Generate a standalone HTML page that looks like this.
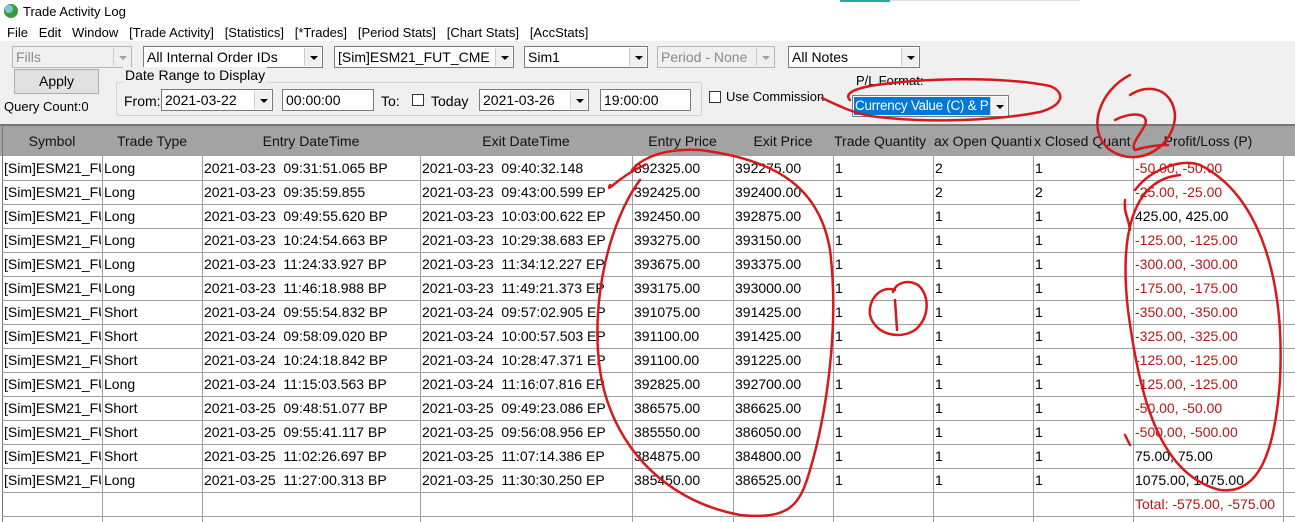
<!DOCTYPE html>
<html><head><meta charset="utf-8"><style>
*{margin:0;padding:0;box-sizing:border-box}
body{width:1295px;height:522px;overflow:hidden;background:#fff;font-family:"Liberation Sans",Arial,sans-serif;font-size:13px;color:#000;position:relative}
.a{position:absolute;white-space:nowrap}
.tb{position:absolute;left:0;top:41px;width:1295px;height:84px;background:#f0f0f0}
.cb{position:absolute;height:22px;background:#fff;border:1px solid #7a7a7a;font-size:14px;padding:2px 3px;line-height:16px;white-space:nowrap;overflow:hidden}
.cb.dis{background:#f0f0f0;color:#8a8a8a;border-color:#b5b5b5}
.dd{position:absolute;right:1px;top:1px;width:17px;height:18px;background:#f0f0f0;border-left:1px solid #ccc}
.dd:after{content:"";position:absolute;left:5px;top:8px;border-left:4px solid transparent;border-right:4px solid transparent;border-top:4px solid #000}
.dis .dd:after{border-top-color:#a0a0a0}
.grid{position:absolute;left:0;top:124px;width:1295px;height:398px;font-size:14px}
.hd{position:absolute;left:0;top:0;width:1295px;height:32px;background:#a3a3a3;border-top:2px solid #777}
.hc{position:absolute;top:9px;text-align:center;color:#111;white-space:nowrap;overflow:hidden}
.vl{position:absolute;width:1px;background:#a0a0a0}
.hl{position:absolute;left:2px;width:1293px;height:1px;background:#a0a0a0}
.c{position:absolute;white-space:nowrap;overflow:hidden;line-height:24px}
.r{color:#b01818}
</style></head><body>
<div class="a" style="left:840px;top:0;width:50px;height:2px;background:#2aa7a0"></div>
<div class="a" style="left:890px;top:0;width:190px;height:1px;background:#ddd"></div>
<svg class="a" style="left:3px;top:3px" width="16" height="16"><circle cx="8" cy="8" r="7" fill="#3c9a3c"/><circle cx="6" cy="6" r="4" fill="#8fd0ff" opacity=".8"/></svg>
<div class="a" style="left:23px;top:4px;font-size:13px">Trade Activity Log</div>
<div class="a" style="left:7px;top:25px;font-size:13px;word-spacing:0">File &nbsp; Edit &nbsp; Window &nbsp; [Trade Activity] &nbsp; [Statistics] &nbsp; [*Trades] &nbsp; [Period Stats] &nbsp; [Chart Stats] &nbsp; [AccStats]</div>
<div class="tb"></div>
<div class="cb dis" style="left:12px;top:46px;width:120px">Fills<div class="dd"></div></div>
<div class="cb" style="left:143px;top:46px;width:180px">All Internal Order IDs<div class="dd"></div></div>
<div class="cb" style="left:334px;top:46px;width:180px">[Sim]ESM21_FUT_CME<div class="dd"></div></div>
<div class="cb" style="left:524px;top:46px;width:124px">Sim1<div class="dd"></div></div>
<div class="cb dis" style="left:657px;top:46px;width:118px">Period - None<div class="dd"></div></div>
<div class="cb" style="left:788px;top:46px;width:132px">All Notes<div class="dd"></div></div>
<div class="a" style="left:14px;top:69px;width:85px;height:25px;border:1px solid #adadad;background:#e1e1e1;text-align:center;font-size:14px;line-height:23px">Apply</div>
<div class="a" style="left:4px;top:99px;font-size:13px">Query Count:0</div>
<div class="a" style="left:116px;top:82px;width:586px;height:34px;border:1px solid #d0d0d0;border-radius:2px"></div>
<div class="a" style="left:123px;top:67px;background:#f0f0f0;padding:0 2px;font-size:14px">Date Range to Display</div>
<div class="a" style="left:124px;top:93px;font-size:14px">From:</div>
<div class="cb" style="left:161px;top:89px;width:112px">2021-03-22<div class="dd"></div></div>
<div class="cb" style="left:282px;top:89px;width:92px">00:00:00</div>
<div class="a" style="left:381px;top:93px;font-size:14px">To:</div>
<div class="a" style="left:412px;top:94px;width:12px;height:12px;border:1px solid #333;background:#fff"></div>
<div class="a" style="left:431px;top:93px;font-size:14px">Today</div>
<div class="cb" style="left:479px;top:89px;width:110px">2021-03-26<div class="dd"></div></div>
<div class="cb" style="left:600px;top:89px;width:91px">19:00:00</div>
<div class="a" style="left:709px;top:91px;width:12px;height:12px;border:1px solid #333;background:#fff"></div>
<div class="a" style="left:726px;top:89px;font-size:13px">Use Commission</div>
<div class="a" style="left:856px;top:73px;font-size:13px">P/L Format:</div>
<div class="cb" style="left:852px;top:95px;width:157px;padding:1px">
<span style="display:inline-block;background:#0078d7;color:#fff;padding:0 1px;height:18px;line-height:18px;width:136px;overflow:hidden;font-size:13.5px;letter-spacing:-0.3px">Currency Value (C) &amp; P</span><div class="dd"></div></div>

<div class="grid">
<div class="hd"></div>
<div class="hc" style="left:2px;width:100px">Symbol</div>
<div class="hc" style="left:102px;width:100px">Trade Type</div>
<div class="hc" style="left:202px;width:218px">Entry DateTime</div>
<div class="hc" style="left:420px;width:212px">Exit DateTime</div>
<div class="hc" style="left:632px;width:101px">Entry Price</div>
<div class="hc" style="left:733px;width:100px">Exit Price</div>
<div class="hc" style="left:834px;width:100px;text-align:left">Trade Quantity</div>
<div class="hc" style="left:934px;width:100px;text-align:left">ax Open Quanti</div>
<div class="hc" style="left:1034px;width:100px;text-align:left">x Closed Quant</div>
<div class="hc" style="left:1133px;width:150px">Profit/Loss (P)</div>
<div class="vl" style="left:2px;top:0;height:398px;background:#777"></div>
<div class="vl" style="left:102px;top:32px;height:366px"></div>
<div class="vl" style="left:202px;top:32px;height:366px"></div>
<div class="vl" style="left:420px;top:32px;height:366px"></div>
<div class="vl" style="left:632px;top:32px;height:366px"></div>
<div class="vl" style="left:733px;top:32px;height:366px"></div>
<div class="vl" style="left:833px;top:32px;height:366px"></div>
<div class="vl" style="left:933px;top:32px;height:366px"></div>
<div class="vl" style="left:1033px;top:32px;height:366px"></div>
<div class="vl" style="left:1133px;top:32px;height:366px"></div>
<div class="vl" style="left:1283px;top:32px;height:366px"></div>
<div id="rows"></div>
</div>
<script>
var d=[
["Long","2021-03-23  09:31:51.065 BP","2021-03-23  09:40:32.148","392325.00","392275.00","1","2","1","-50.00, -50.00",1],
["Long","2021-03-23  09:35:59.855","2021-03-23  09:43:00.599 EP","392425.00","392400.00","1","2","2","-25.00, -25.00",1],
["Long","2021-03-23  09:49:55.620 BP","2021-03-23  10:03:00.622 EP","392450.00","392875.00","1","1","1","425.00, 425.00",0],
["Long","2021-03-23  10:24:54.663 BP","2021-03-23  10:29:38.683 EP","393275.00","393150.00","1","1","1","-125.00, -125.00",1],
["Long","2021-03-23  11:24:33.927 BP","2021-03-23  11:34:12.227 EP","393675.00","393375.00","1","1","1","-300.00, -300.00",1],
["Long","2021-03-23  11:46:18.988 BP","2021-03-23  11:49:21.373 EP","393175.00","393000.00","1","1","1","-175.00, -175.00",1],
["Short","2021-03-24  09:55:54.832 BP","2021-03-24  09:57:02.905 EP","391075.00","391425.00","1","1","1","-350.00, -350.00",1],
["Short","2021-03-24  09:58:09.020 BP","2021-03-24  10:00:57.503 EP","391100.00","391425.00","1","1","1","-325.00, -325.00",1],
["Short","2021-03-24  10:24:18.842 BP","2021-03-24  10:28:47.371 EP","391100.00","391225.00","1","1","1","-125.00, -125.00",1],
["Long","2021-03-24  11:15:03.563 BP","2021-03-24  11:16:07.816 EP","392825.00","392700.00","1","1","1","-125.00, -125.00",1],
["Short","2021-03-25  09:48:51.077 BP","2021-03-25  09:49:23.086 EP","386575.00","386625.00","1","1","1","-50.00, -50.00",1],
["Short","2021-03-25  09:55:41.117 BP","2021-03-25  09:56:08.956 EP","385550.00","386050.00","1","1","1","-500.00, -500.00",1],
["Short","2021-03-25  11:02:26.697 BP","2021-03-25  11:07:14.386 EP","384875.00","384800.00","1","1","1","75.00, 75.00",0],
["Long","2021-03-25  11:27:00.313 BP","2021-03-25  11:30:30.250 EP","385450.00","386525.00","1","1","1","1075.00, 1075.00",0]];
var x=[4,104,204,422,634,735,835,935,1035,1135],w=[97,97,215,209,98,97,97,97,97,147],h="";
function e(s){return s.replace(/  /g," &nbsp;")}
for(var i=0;i<d.length;i++){var t=32+24*i;var v=["[Sim]ESM21_FUT_CME"].concat(d[i].slice(0,9));
for(var j=0;j<10;j++)h+='<div class="c'+(j==9&&d[i][9]?' r':'')+'" style="left:'+x[j]+'px;top:'+t+'px;width:'+w[j]+'px">'+e(v[j])+'</div>';
h+='<div class="hl" style="top:'+(t+24)+'px"></div>';}
h+='<div class="c r" style="left:1135px;top:368px">Total: -575.00, -575.00</div><div class="hl" style="top:392px"></div>';
document.getElementById("rows").innerHTML=h;
</script>
<svg class="a" style="left:0;top:0" width="1295" height="522" fill="none" stroke="#d41a1a" stroke-width="2.5" stroke-linecap="round">
<path d="M822 98 C835 104 850 112 870 116 C930 124 1000 120 1040 112 C1065 105 1065 92 1050 86 C1000 76 920 78 870 86 C850 90 845 95 850 100"/>
<path d="M1130 75 C1100 90 1085 130 1110 150 C1140 170 1175 145 1175 115 C1173 90 1150 82 1130 95 M1115 120 C1130 112 1150 112 1145 125 C1140 135 1130 145 1135 150 C1145 147 1158 145 1168 145"/>
<path d="M645 165 C620 175 605 195 610 185 M640 180 C610 220 590 300 600 370 C610 440 660 500 740 515 C790 520 800 505 810 470 C825 420 840 330 830 250 C820 190 780 160 700 150 C660 148 640 160 632 170"/>
<path d="M895 290 C880 285 868 300 870 315 C875 335 900 340 915 330 C930 318 930 295 918 285 C905 278 895 285 893 292 M895 300 L897 330"/>
<path d="M1180 175 C1130 180 1120 240 1128 310 C1140 400 1160 475 1220 490 C1260 495 1275 450 1280 380 C1285 280 1260 195 1200 165 C1180 158 1150 170 1135 190 M1125 200 C1124 215 1128 215 1130 230 M1125 435 L1130 445"/>
</svg>
</body></html>
